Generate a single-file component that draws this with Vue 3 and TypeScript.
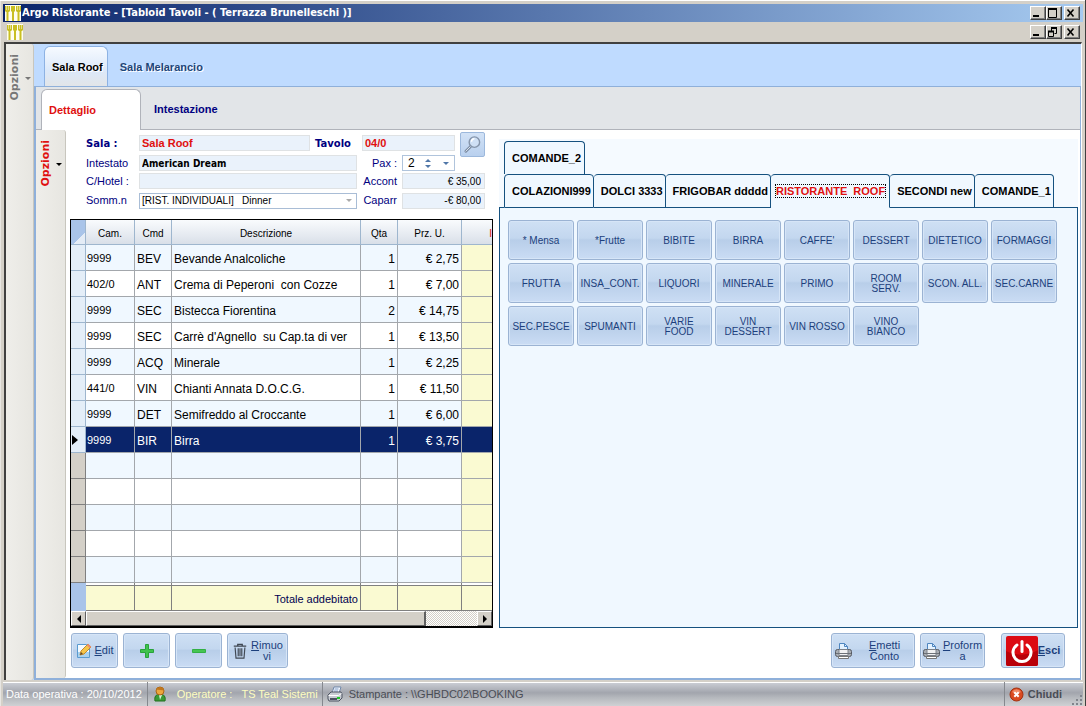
<script setup lang="ts">
import { ref } from 'vue'

interface OrderRow {
  cam: string
  cmd: string
  desc: string
  qty: string
  price: string
}

const rows: OrderRow[] = [
  { cam: '9999', cmd: 'BEV', desc: 'Bevande Analcoliche', qty: '1', price: '€ 2,75' },
  { cam: '402/0', cmd: 'ANT', desc: 'Crema di Peperoni  con Cozze', qty: '1', price: '€ 7,00' },
  { cam: '9999', cmd: 'SEC', desc: 'Bistecca Fiorentina', qty: '2', price: '€ 14,75' },
  { cam: '9999', cmd: 'SEC', desc: "Carrè d'Agnello  su Cap.ta di ver", qty: '1', price: '€ 13,50' },
  { cam: '9999', cmd: 'ACQ', desc: 'Minerale', qty: '1', price: '€ 2,25' },
  { cam: '441/0', cmd: 'VIN', desc: 'Chianti Annata D.O.C.G.', qty: '1', price: '€ 11,50' },
  { cam: '9999', cmd: 'DET', desc: 'Semifreddo al Croccante', qty: '1', price: '€ 6,00' },
  { cam: '9999', cmd: 'BIR', desc: 'Birra', qty: '1', price: '€ 3,75' },
]
const emptyRows = 5
const selected = ref(7)

const menuTabs = ['COLAZIONI999', 'DOLCI 3333', 'FRIGOBAR ddddd', 'RISTORANTE  ROOF', 'SECONDI new', 'COMANDE_1']
const activeMenu = ref('RISTORANTE  ROOF')

const products = [
  '* Mensa', '*Frutte', 'BIBITE', 'BIRRA', "CAFFE'", 'DESSERT', 'DIETETICO', 'FORMAGGI',
  'FRUTTA', 'INSA_CONT.', 'LIQUORI', 'MINERALE', 'PRIMO', 'ROOM SERV.', 'SCON. ALL.', 'SEC.CARNE',
  'SEC.PESCE', 'SPUMANTI', 'VARIE FOOD', 'VIN DESSERT', 'VIN ROSSO', 'VINO BIANCO',
]

const sala = ref('Sala Roof')
const tavolo = ref('04/0')
const intestato = ref('American Dream')
const hotel = ref('')
const pax = ref('2')
const acconto = ref('€ 35,00')
const caparra = ref('-€ 80,00')
</script>

<template>
  <div class="window">
    <header class="titlebar">
      <svg class="forks" viewBox="0 0 16 16" aria-hidden="true">
        <rect width="16" height="16" fill="#fffef0" />
        <g fill="none" stroke="#c9bf22">
          <path d="M.500 1v5M4.500 1v5M6.500 1v5M9.500 1v5M11.500 1v5M15.500 1v5" />
          <path d="M.500 6h4M6.500 6h3M11.500 6h4" stroke-width="2" />
          <path d="M2.500 1v15M8 1v15M13.500 1v15" stroke-width="2" />
        </g>
      </svg>
      <h1>Argo Ristorante - [Tabloid Tavoli - ( Terrazza Brunelleschi )]</h1>
      <div class="winbtns">
        <button type="button" aria-label="Riduci a icona"><svg viewBox="0 0 12 10"><path d="M2 8h6" stroke="#000" stroke-width="2" /></svg></button>
        <button type="button" aria-label="Ingrandisci"><svg viewBox="0 0 12 10"><path d="M1.500 1v8.500h8V1M1 1.500h9" fill="none" stroke="#000" /><path d="M1 1h9" stroke="#000" stroke-width="2" /></svg></button>
        <button type="button" class="close" aria-label="Chiudi finestra"><svg viewBox="0 0 12 10"><path d="M2.500 1.500l6 7M8.500 1.500l-6 7" stroke="#000" stroke-width="1.600" /></svg></button>
      </div>
    </header>
    <div class="mdibar">
      <svg class="forks" viewBox="0 0 16 16" aria-hidden="true">
        <rect width="16" height="16" fill="#fffef0" />
        <g fill="none" stroke="#c9bf22">
          <path d="M.500 1v5M4.500 1v5M6.500 1v5M9.500 1v5M11.500 1v5M15.500 1v5" />
          <path d="M.500 6h4M6.500 6h3M11.500 6h4" stroke-width="2" />
          <path d="M2.500 1v15M8 1v15M13.500 1v15" stroke-width="2" />
        </g>
      </svg>
      <div class="winbtns">
        <button type="button" aria-label="Riduci documento"><svg viewBox="0 0 12 10"><path d="M2 8h6" stroke="#000" stroke-width="2" /></svg></button>
        <button type="button" aria-label="Ripristina documento"><svg viewBox="0 0 12 10"><path d="M4.500 4V1.500h5v5H7.500M1.500 4.500h5v5h-5z" fill="none" stroke="#000" /><path d="M4 1h6M1 4.500h6" stroke="#000" stroke-width="2" /></svg></button>
        <button type="button" class="close" aria-label="Chiudi documento"><svg viewBox="0 0 12 10"><path d="M2.500 1.500l6 7M8.500 1.500l-6 7" stroke="#000" stroke-width="1.600" /></svg></button>
      </div>
    </div>

    <div class="workspace">
      <button type="button" class="side outer">
        <span>Opzioni</span><i class="caret"></i>
      </button>
      <div class="rooms">
        <nav class="roomtabs">
          <button type="button" class="active">Sala Roof</button>
          <button type="button">Sala Melarancio</button>
        </nav>
        <div class="roompanel">
          <nav class="viewtabs">
            <button type="button" class="active">Dettaglio</button>
            <button type="button">Intestazione</button>
          </nav>
          <div class="detail">
            <button type="button" class="side inner">
              <span>Opzioni</span><i class="caret"></i>
            </button>
            <main class="content">
              <div class="columns">
                <section class="order">
                  <form class="form" @submit.prevent>
                    <label class="big" for="sala">Sala :</label>
                    <input id="sala" v-model="sala" class="field red">
                    <label class="big tav" for="tavolo">Tavolo</label>
                    <input id="tavolo" v-model="tavolo" class="field red tavfield">
                    <button type="button" class="search" aria-label="Cerca">
                      <svg viewBox="0 0 20 20" fill="none">
                        <path d="M8 12L3 17" stroke="#7d8da3" stroke-width="3" stroke-linecap="round" />
                        <path d="M8 12L3 17" stroke="#dbe6f3" stroke-width="1" stroke-linecap="round" />
                        <circle cx="12" cy="7.500" r="5.500" fill="#cfe0f5" stroke="#8595ab" stroke-width="1.500" />
                        <path d="M9 7a3 3 0 0 1 3-3" stroke="#fff" stroke-width="1.500" />
                      </svg>
                    </button>

                    <label for="intestato">Intestato</label>
                    <input id="intestato" v-model="intestato" class="field wide strong">
                    <label class="r" for="pax">Pax :</label>
                    <div class="pax">
                      <input id="pax" v-model="pax">
                      <span class="spin">
                        <button type="button" aria-label="Aumenta"><i class="up"></i></button>
                        <button type="button" aria-label="Diminuisci"><i class="down"></i></button>
                      </span>
                      <button type="button" class="drop" aria-label="Elenco"><i class="down"></i></button>
                    </div>

                    <label for="hotel">C/Hotel :</label>
                    <input id="hotel" v-model="hotel" class="field wide">
                    <label class="r" for="acconto">Accont</label>
                    <input id="acconto" v-model="acconto" class="field amount">

                    <label for="somm">Somm.n</label>
                    <div class="selectbox">
                      <select id="somm">
                        <option>[RIST. INDIVIDUALI]&nbsp;&nbsp; Dinner</option>
                      </select>
                      <i class="down"></i>
                    </div>
                    <label class="r" for="caparra">Caparr</label>
                    <input id="caparra" v-model="caparra" class="field amount">
                  </form>

                  <div class="grid">
                    <table>
                      <colgroup>
                        <col class="c0"><col class="c1"><col class="c2"><col><col class="c4"><col class="c5"><col class="c6">
                      </colgroup>
                      <thead>
                        <tr>
                          <th class="corner"></th><th>Cam.</th><th>Cmd</th><th>Descrizione</th><th>Qta</th><th>Prz. U.</th><th class="cut">I</th>
                        </tr>
                      </thead>
                      <tbody>
                        <tr v-for="(row, i) in rows" :key="i" :class="{ sel: i === selected }" @click="selected = i">
                          <td class="mark"><i v-if="i === selected" class="pointer"></i></td>
                          <td class="cam">{{ row.cam }}</td>
                          <td>{{ row.cmd }}</td>
                          <td>{{ row.desc }}</td>
                          <td class="num">{{ row.qty }}</td>
                          <td class="num">{{ row.price }}</td>
                          <td class="total"></td>
                        </tr>
                        <tr v-for="n in emptyRows" :key="'e' + n" class="empty">
                          <td class="mark"></td><td></td><td></td><td></td><td></td><td></td><td class="total"></td>
                        </tr>
                      </tbody>
                      <tfoot>
                        <tr>
                          <td class="mark"></td><td></td><td></td><td class="sum">Totale addebitato</td><td></td><td></td><td></td>
                        </tr>
                      </tfoot>
                    </table>
                    <div class="hscroll">
                      <button type="button" aria-label="Scorri a sinistra"><i class="left"></i></button>
                      <div class="track"><div class="thumb"></div></div>
                      <button type="button" aria-label="Scorri a destra"><i class="pointer small"></i></button>
                    </div>
                  </div>
                </section>

                <section class="menu">
                  <nav class="menutabs">
                    <div class="tabrow upper"><button type="button">COMANDE_2</button></div>
                    <div class="tabrow">
                      <button
                        v-for="tab in menuTabs"
                        :key="tab"
                        type="button"
                        :class="{ active: tab === activeMenu }"
                        @click="activeMenu = tab"
                      ><span>{{ tab }}</span></button>
                      <div class="rest"></div>
                    </div>
                  </nav>
                  <div class="products">
                    <button v-for="p in products" :key="p" type="button" class="glass">{{ p }}</button>
                  </div>
                </section>
              </div>

              <div class="actions">
                <button type="button" class="glass edit">
                  <svg viewBox="0 0 16 16" fill="none">
                    <path d="M1.500 1.500h9l3 3v10h-12z" fill="#f4faff" stroke="#5a9bd0" />
                    <path d="M2 9h11v5H2z" fill="#a9d2f0" />
                    <path d="M4 12l1-4 7-7 3 3-7 7z" fill="#f5c64a" stroke="#c48a2c" />
                    <path d="M11.500 1.500l3 3" stroke="#e98b72" stroke-width="2" />
                    <path d="M4 12l1-3 2 2z" fill="#644b2c" />
                  </svg>
                  <span><u>E</u>dit</span>
                </button>
                <button type="button" class="glass plus" aria-label="Aggiungi">
                  <svg viewBox="0 0 16 16"><path d="M6.500 1.500h3V6.500h5v3h-5v5h-3v-5h-5v-3h5z" fill="#3fc24d" stroke="#28a33b" /></svg>
                </button>
                <button type="button" class="glass minus" aria-label="Togli">
                  <svg viewBox="0 0 16 16"><path d="M1.500 6.500h13v3h-13z" fill="#45c552" stroke="#33b044" /></svg>
                </button>
                <button type="button" class="glass remove">
                  <svg viewBox="0 0 16 18" fill="none" stroke="#3f4752">
                    <path d="M1 3.500h14M5.500 3V1.500h5V3" stroke-width="1.500" />
                    <path d="M2.500 5l1 12h9l1-12M6 6v9M8 6v9M10 6v9" stroke-width="1.300" />
                  </svg>
                  <span><u>R</u>imuo<br>vi</span>
                </button>
                <button type="button" class="glass emit">
                  <svg class="printer" viewBox="0 0 17 17">
                    <path d="M4.500 8V1.500h5l3 3V8z" fill="#e4f2ff" stroke="#4f86c0" />
                    <path d="M9.500 1.500v3h3" fill="none" stroke="#4f86c0" />
                    <rect x=".5" y="7.500" width="16" height="7" rx="2" fill="#a9adb3" stroke="#565b63" />
                    <path d="M4 7.500h9v6H4z" fill="#f1f1f2" stroke="#7d828a" />
                    <path d="M1 11.500h15" stroke="#6c7178" />
                    <path d="M3.500 14.500h10v2h-10z" fill="#fff" stroke="#777" />
                  </svg>
                  <span><u>E</u>metti<br>Conto</span>
                </button>
                <button type="button" class="glass proforma">
                  <svg class="printer" viewBox="0 0 17 17">
                    <path d="M4.500 8V1.500h5l3 3V8z" fill="#e4f2ff" stroke="#4f86c0" />
                    <path d="M9.500 1.500v3h3" fill="none" stroke="#4f86c0" />
                    <rect x=".5" y="7.500" width="16" height="7" rx="2" fill="#a9adb3" stroke="#565b63" />
                    <path d="M4 7.500h9v6H4z" fill="#f1f1f2" stroke="#7d828a" />
                    <path d="M1 11.500h15" stroke="#6c7178" />
                    <path d="M3.500 14.500h10v2h-10z" fill="#fff" stroke="#777" />
                  </svg>
                  <span><u>P</u>roform<br>a</span>
                </button>
                <button type="button" class="glass exit">
                  <svg viewBox="0 0 32 30" fill="none">
                    <rect width="32" height="30" rx="2" fill="#dc0a12" />
                    <path d="M0 15C10 20 22 20 32 14v14a2 2 0 0 1-2 2H2a2 2 0 0 1-2-2z" fill="#b90009" />
                    <path d="M11 9a9 9 0 1 0 10 0" stroke="#fff" stroke-width="3" stroke-linecap="round" />
                    <path d="M16 5.500v10" stroke="#fff" stroke-width="3" stroke-linecap="round" />
                  </svg>
                  <span><u>E</u>sci</span>
                </button>
              </div>
            </main>
          </div>
        </div>
      </div>
    </div>

    <footer class="status">
      <div class="cell date">Data operativa : 20/10/2012</div>
      <div class="cell operator">
        <svg viewBox="0 0 16 16">
          <path d="M3 15c-1-4 1-7 5-7s6 3 5 7z" fill="#3b9a35" stroke="#23701f" />
          <path d="M7 9l1 5 2-5z" fill="#d9f0d5" />
          <circle cx="8" cy="5" r="4" fill="#eda63c" stroke="#a96415" />
          <path d="M4 4c1-3 6-4 8 0-3 1-5-1-8 0z" fill="#c0761c" />
        </svg>
        <span>Operatore :</span><span class="who">TS Teal Sistemi</span>
      </div>
      <div class="cell printercell">
        <svg viewBox="0 0 16 16">
          <path d="M5 7l2-6h7l-2 6z" fill="#f5f9ff" stroke="#7188aa" />
          <path d="M7.500 3h4M7 5h4" stroke="#7e9ac6" />
          <path d="M1 9l3-3h10l1 2v4l-3 3H2l-1-2z" fill="#c8ccd3" stroke="#4c5361" />
          <path d="M1.500 9.500h10l3-2" fill="none" stroke="#fff" />
          <path d="M3 13h7" stroke="#4c5361" stroke-width="2" />
          <rect x="10" y="11" width="3" height="2" fill="#1ec927" />
        </svg>
        <span>Stampante : \\GHBDC02\BOOKING</span>
      </div>
      <button type="button" class="cell quit">
        <svg viewBox="0 0 15 15">
          <circle cx="7.500" cy="7.500" r="6.500" fill="#da4a20" stroke="#a3300f" />
          <path d="M3 5a5 5 0 0 1 9 0c-3 2-6 2-9 0z" fill="#f08a66" />
          <path d="M5.300 5.300l4.400 4.400M9.700 5.300l-4.400 4.400" stroke="#fff" stroke-width="2" />
        </svg>
        <b>Chiudi</b>
      </button>
      <svg class="grip" viewBox="0 0 12 12" fill="#80848c" aria-hidden="true">
        <path d="M9 1h2v2H9zM9 5h2v2H9zM5 5h2v2H5zM9 9h2v2H9zM5 9h2v2H5zM1 9h2v2H1z" />
      </svg>
    </footer>
  </div>
</template>

<style>
body {
  margin: 0;
}
</style>

<style scoped>
* {
  box-sizing: border-box;
}
button,
input,
select {
  font: inherit;
  color: inherit;
  margin: 0;
  padding: 0;
  border: 0;
  border-radius: 0;
  background: none;
}
.window {
  display: flex;
  flex-direction: column;
  min-height: 100vh;
  padding: 4px 2px 2px 3px;
  background: #d4d0c8;
  border-right: 1px solid #404040;
  box-shadow: inset 0 2px 0 -1px #fff, inset 1px 0 #e8e6e2;
  font: 11px/13px "Liberation Sans", Arial, sans-serif;
}
.titlebar,
.mdibar {
  display: flex;
  align-items: center;
  padding: 0 3px 0 2px;
}
.titlebar {
  height: 18px;
  background: linear-gradient(90deg, #0a246a, #a6caf0);
}
.mdibar {
  height: 20px;
  padding-left: 4px;
}
.forks {
  width: 16px;
  height: 16px;
}
h1 {
  flex: 1;
  margin: 0;
  padding-left: 1px;
  color: #fff;
  font: bold 11px/16px "DejaVu Sans Condensed", "DejaVu Sans", sans-serif;
  white-space: nowrap;
}
.winbtns {
  display: flex;
  margin-left: auto;
}
.winbtns button {
  width: 16px;
  height: 14px;
  background: #d4d0c8;
  border: 1px solid;
  border-color: #fff #404040 #404040 #fff;
  box-shadow: inset -1px -1px #808080;
}
.winbtns .close {
  margin-left: 2px;
}
.winbtns svg {
  display: block;
  width: 12px;
  height: 10px;
}
.workspace {
  flex: 1;
  display: flex;
  margin: 0 1px;
  border: solid #404040;
  border-width: 2px 0 0 2px;
  background: #bfdbff;
  border-right: 1px solid #fff;
}
.side {
  display: flex;
  justify-content: center;
  gap: 4px;
  padding-top: 10px;
  background: linear-gradient(90deg, #efeeea, #e7e6e1);
  border-right: 1px solid #c8c6be;
  border-radius: 0 3px 3px 0;
  align-items: flex-start;
  flex: none;
}
.side span {
  writing-mode: vertical-rl;
  transform: rotate(180deg);
  font: bold 11px/13px "DejaVu Sans", Verdana, sans-serif;
}
.side .caret {
  margin-top: 23px;
}
.outer {
  width: 28px;
  color: #777;
}
.inner {
  width: 30px;
  color: #e01010;
}
.inner .caret {
  color: #000;
}
.caret,
.down,
.up {
  display: block;
  width: 0;
  height: 0;
  border: 3px solid transparent;
  border-bottom-width: 0;
  border-top-color: currentColor;
}
.up {
  border-width: 0 3px 3px;
  border-bottom-color: currentColor;
}
.rooms {
  flex: 1;
  min-width: 0;
  display: flex;
  flex-direction: column;
}
.roomtabs {
  display: flex;
  height: 42px;
  padding: 2px 0 0 10px;
  color: #1e4679;
  font-weight: bold;
}
.roomtabs button {
  padding: 2px 12px 0;
  text-shadow: 1px 1px #fff;
}
.roomtabs .active {
  padding: 2px 4px 0 7px;
  color: #000;
  background: linear-gradient(#f6faff, #dce9fa 60%, #e2e5e8);
  border: 1px solid #8db2e3;
  border-bottom: 0;
  border-radius: 6px 6px 0 0;
}
.roompanel {
  flex: 1;
  display: flex;
  flex-direction: column;
  background: #fff;
  border: solid #8fb0da;
  border-width: 1px 1px 2px 2px;
}
.viewtabs {
  display: flex;
  height: 43px;
  padding: 2px 0 0 5px;
  background: #e2e5e8;
  border-bottom: 1px solid #b0b3ba;
  font-weight: bold;
  color: #000080;
}
.viewtabs button {
  padding: 0 13px;
}
.viewtabs .active {
  width: 100px;
  height: 41px;
  padding: 0 0 0 7px;
  text-align: left;
  color: #e01010;
  background: #fff;
  border: 1px solid #b0b3ba;
  border-bottom: 0;
  border-radius: 6px 6px 0 0;
}
.detail {
  flex: 1;
  display: flex;
}
.content {
  flex: 1;
  min-width: 0;
  display: flex;
  flex-direction: column;
  padding: 2px 2px 10px 4px;
}
.columns {
  flex: 1;
  display: flex;
  gap: 6px;
}
.order {
  flex: 0 0 423px;
  display: flex;
  flex-direction: column;
}
.form {
  display: grid;
  grid-template-columns: 53px 171px 47px 45px 53px 30px;
  grid-template-rows: 22px 18px 18px 21px;
  align-items: center;
  padding: 0 7px 8px 16px;
  color: #000080;
}
.form .big {
  font: bold 10px/13px "DejaVu Sans", Verdana, sans-serif;
}
.form .tav {
  padding-left: 5px;
}
.field {
  width: 100%;
  min-width: 0;
  height: 16px;
  padding: 0 3px;
  background: #eaf2fb;
  border: 1px solid #dfe2e4;
  color: #000;
}
.red {
  padding: 0 2px;
  color: #e01010;
  font-weight: bold;
}
.tavfield {
  grid-column: 4 / 6;
  justify-self: end;
  width: 93px;
}
.wide {
  grid-column: 2 / 4;
}
.strong {
  padding: 0 2px;
  font: bold 10px/13px "DejaVu Sans Condensed", "DejaVu Sans", sans-serif;
}
.r {
  text-align: right;
  padding-right: 5px;
}
.search {
  grid-column: 6;
  grid-row: 1 / 3;
  justify-self: end;
  align-self: start;
  width: 25px;
  height: 25px;
  display: grid;
  place-items: center;
  background: linear-gradient(#d2e2f6, #b9d0ee);
  border: 1px solid #9cb8dc;
  border-radius: 2px;
}
.search svg {
  width: 19px;
  height: 19px;
}
.pax {
  display: flex;
  align-items: center;
  height: 16px;
  border: 1px solid #b0c4dc;
  color: #5077a8;
}
.pax input {
  width: 22px;
  padding-left: 5px;
  color: #000;
  font-size: 12px;
}
.spin {
  display: flex;
  flex-direction: column;
  gap: 3px;
  flex: 1;
}
.spin button,
.drop {
  display: flex;
}
.drop {
  margin-right: 5px;
}
.amount {
  grid-column: 5 / 7;
  text-align: right;
  font-size: 10px;
}
.selectbox {
  grid-column: 2 / 4;
  display: flex;
  align-items: center;
  height: 16px;
  padding: 0 4px 0 2px;
  border: 1px solid #a9bdd6;
  color: #aaa;
}
.selectbox select {
  flex: 1;
  appearance: none;
  color: #000;
  font-size: 10px;
}
.grid {
  border: 1px solid #000;
  border-bottom-width: 2px;
}
table {
  width: 100%;
  table-layout: fixed;
  border-collapse: separate;
  border-spacing: 0;
  font-size: 12px;
}
.c0 { width: 15px; }
.c1 { width: 49px; }
.c2 { width: 37px; }
.c4 { width: 37px; }
.c5 { width: 64px; }
.c6 { width: 30px; }
th {
  height: 25px;
  padding: 2px 0 0;
  font-size: 10px;
  font-weight: normal;
  background: linear-gradient(#f9fbfd, #e3e8ef 70%, #d8dfe8);
  border: solid #9eb6ce;
  border-width: 0 1px 1px 0;
}
th.corner {
  background: linear-gradient(135deg, #a9c4e9 70%, #e4ecf6 70%);
}
th.cut {
  color: #e01010;
  text-align: right;
}
td {
  height: 26px;
  padding: 3px 2px 0;
  overflow: hidden;
  white-space: pre;
  border: solid #a3a7ac;
  border-width: 0 1px 1px 0;
}
th:last-child,
td:last-child {
  border-right: 0;
}
tbody tr:nth-child(odd) td {
  background: #f0f8ff;
}
tbody tr td.mark {
  padding: 0;
  background: #e4eef8;
  border-color: #9eb6ce;
}
tbody tr td.total {
  background: #fafad2;
}
tbody .cam {
  padding: 2px 1px 0;
  font-size: 11px;
}
.num {
  text-align: right;
}
tbody tr.sel td:not(.mark) {
  background: #0a246a;
  color: #fff;
}
tbody tr.empty td.mark {
  background: #d4d0c8;
  border-color: #808080;
}
.pointer {
  display: block;
  width: 0;
  height: 0;
  margin-left: 1px;
  border: solid transparent;
  border-width: 5px 0 5px 6px;
  border-left-color: #000;
}
.pointer.small,
.left {
  margin: 0;
  border-width: 4px 0 4px 4px;
}
.left {
  width: 0;
  height: 0;
  border: solid transparent;
  border-width: 4px 4px 4px 0;
  border-right-color: #000;
}
tfoot td {
  height: 28px;
  padding-top: 5px;
  background: linear-gradient(#fff 2px, #808080 2px, #808080 3px, #fafad2 3px);
  border-color: #808080;
  color: #000050;
  font-size: 11px;
}
tfoot td.mark {
  background: #a9c4e9;
  border-color: #a9c4e9;
}
.sum {
  text-align: right;
}
.hscroll {
  display: flex;
  height: 15px;
  background: #d4d0c8;
}
.hscroll button {
  width: 15px;
  display: grid;
  place-items: center;
}
.hscroll button,
.thumb {
  background: #d4d0c8;
  border: 1px solid;
  border-color: #fff #606060 #606060 #fff;
}
.track {
  flex: 1;
  display: flex;
  background: repeating-conic-gradient(#d4d0c8 0 25%, #fff 0 50%) 0 0 / 2px 2px;
}
.thumb {
  width: 87%;
  border-width: 1px 2px 1px 1px;
}
.menu {
  flex: 1;
  min-width: 0;
  display: flex;
  flex-direction: column;
  margin-top: 7px;
  background: #f5faff;
}
.menutabs {
  padding-top: 2px;
  font-weight: bold;
}
.tabrow {
  display: flex;
  padding-left: 5px;
  height: 34px;
  background: linear-gradient(#15517f, #15517f) 0 100% / 5px 1px no-repeat;
}
.tabrow.upper {
  height: 33px;
  background: none;
}
.tabrow button {
  padding: 0 2px 0 7px;
  white-space: pre;
  background: #f0f8ff;
  border: 1px solid #15517f;
  border-left-width: 0;
  border-radius: 4px 4px 0 0;
}
.tabrow button:first-child {
  border-left-width: 1px;
}
.tabrow.upper button {
  padding-right: 3px;
  border-bottom: 0;
}
.tabrow .active {
  padding: 0 4px 0 5px;
  color: #e01010;
  border-bottom-color: #f0f8ff;
}
.active span {
  outline: 1px dotted #000;
}
.rest {
  flex: 1;
  border-bottom: 1px solid #15517f;
}
.products {
  flex: 1;
  display: grid;
  grid-template-columns: repeat(auto-fill, 66px);
  grid-auto-rows: 40px;
  align-content: start;
  gap: 3px;
  padding: 12px 8px;
  background: #f0f8ff;
  border: 1px solid #15517f;
  border-top: 0;
}
.glass {
  color: #1c3f7c;
  background: linear-gradient(#cfe0f4, #c3d7ef 45%, #b8cee9 50%, #cadcf4);
  border: 1px solid #9bb3d3;
  border-radius: 3px;
  box-shadow: inset 0 0 0 1px #d6e5f7;
}
.products .glass {
  padding: 2px 2px 0;
  font-size: 10px;
  line-height: 10px;
}
.actions {
  display: flex;
  gap: 5px;
  padding: 5px 13px 0 1px;
}
.actions .glass {
  display: flex;
  align-items: center;
  justify-content: center;
  gap: 3px;
  height: 35px;
  line-height: 11px;
}
.actions svg {
  width: 16px;
  height: 16px;
  flex: none;
}
.edit,
.plus,
.minus {
  width: 47px;
}
.remove {
  width: 61px;
}
.actions .printer {
  width: 17px;
  height: 17px;
}
.emit {
  width: 84px;
  margin-left: auto;
}
.actions .emit {
  justify-content: flex-start;
  padding-left: 3px;
}
.emit span {
  flex: 1;
}
.proforma {
  width: 65px;
}
.exit {
  width: 64px;
  margin-left: 11px;
  font-weight: bold;
}
.actions .exit {
  gap: 0;
}
.actions .exit svg {
  width: 32px;
  height: 30px;
}
.status {
  display: flex;
  height: 24px;
  margin-top: 2px;
  background: linear-gradient(#fff 1px, #c9ccd3 1px, #a2a5ad 45%, #b5b8bd 65%, #cfd1d4);
  color: #4a4d55;
}
.cell {
  display: flex;
  align-items: center;
  border-right: 1px solid #85888e;
}
.cell svg {
  width: 16px;
  height: 16px;
}
.date {
  padding: 0 5px 0 3px;
  color: #fff;
}
.operator {
  gap: 9px;
  padding: 0 4px;
  color: #fdfdc0;
}
.printercell {
  flex: 1;
  gap: 6px;
  padding-left: 4px;
}
.quit {
  gap: 4px;
  padding: 0 5px 0 4px;
  border-right: 0;
}
.quit svg {
  width: 15px;
  height: 15px;
}
.grip {
  width: 12px;
  height: 12px;
  margin-left: 4px;
  align-self: flex-end;
}
</style>
